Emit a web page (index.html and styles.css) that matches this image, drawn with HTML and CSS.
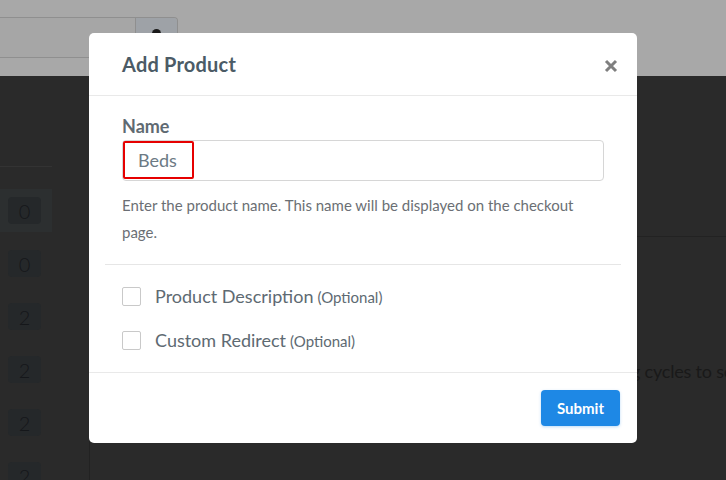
FILE: index.html
```html
<!DOCTYPE html>
<html lang="en">
<head>
<meta charset="utf-8">
<title>Add Product</title>
<link rel="stylesheet" href="styles.css">
</head>
<body>
<div class="page">
  <header class="topbar">
    <div class="search">
      <div class="search-field"></div>
      <div class="search-btn"><span class="search-dot"></span></div>
    </div>
  </header>
  <div class="main">
    <aside class="side">
      <div class="side-rule"></div>
      <div class="side-row active"><span class="badge">0</span></div>
      <div class="side-row"><span class="badge">0</span></div>
      <div class="side-row"><span class="badge">2</span></div>
      <div class="side-row"><span class="badge">2</span></div>
      <div class="side-row"><span class="badge">2</span></div>
      <div class="side-row"><span class="badge">2</span></div>
    </aside>
    <div class="gutter"></div>
    <section class="content">
      <div class="content-top"></div>
      <p class="content-text">g cycles to se</p>
    </section>
  </div>

  <div class="modal" role="dialog" aria-label="Add Product">
    <div class="modal-header">
      <h2 class="modal-title">Add Product</h2>
      <button class="close" aria-label="Close">
        <svg width="14" height="14" viewBox="0 0 14 14"><path d="M2 2 L12 12 M12 2 L2 12" stroke="#7f7f7f" stroke-width="3" stroke-linecap="butt"/></svg>
      </button>
    </div>
    <div class="modal-body">
      <label class="field-label">Name</label>
      <div class="input">
        <span class="input-value">Beds</span>
      </div>
      <p class="help">Enter the product name. This name will be displayed on the checkout page.</p>
    </div>
    <div class="options">
      <label class="option"><span class="check"></span><span class="opt-text">Product Description</span><span class="opt-small">(Optional)</span></label>
      <label class="option"><span class="check"></span><span class="opt-text">Custom Redirect</span><span class="opt-small">(Optional)</span></label>
    </div>
    <div class="modal-footer">
      <button class="submit">Submit</button>
    </div>
  </div>
</div>
</body>
</html>
```
FILE: styles.css
```css
html, body {
  margin: 0;
  padding: 0;
  width: 726px;
  height: 480px;
  overflow: hidden;
  font-family: Lato, "Open Sans", Arial, sans-serif;
}

.page {
  position: relative;
  width: 726px;
  height: 480px;
  background: #2a2a2a;
}

/* top band */
.topbar {
  height: 76px;
  background: #a8a8a8;
  padding-top: 17px;
  box-sizing: border-box;
}

.search {
  display: flex;
  width: 178px;
  height: 41px;
  box-sizing: border-box;
  border-top: 1px solid #8f8f8f;
  border-bottom: 1px solid #8f8f8f;
  border-right: 1px solid #8f8f8f;
  border-top-right-radius: 4px;
}

.search-field {
  width: 135px;
  background: #a6a6a6;
}

.search-btn {
  flex: 1;
  background: #9ea2a7;
  border-left: 1px solid #8f8f8f;
  border-top-right-radius: 4px;
  display: flex;
  justify-content: center;
  padding-top: 11px;
}

.search-dot {
  width: 9px;
  height: 9px;
  border-radius: 50%;
  background: #1a1a1a;
}

/* main dark area */
.main {
  display: flex;
  height: 404px;
}

.side {
  flex: 0 0 52px;
  padding-top: 90px;
}

.side-rule {
  height: 1px;
  background: #333;
  margin-bottom: 22px;
}

.side-row {
  height: 53px;
  display: flex;
  align-items: center;
  padding-left: 8px;
  box-sizing: border-box;
}

.side-row.active {
  height: 43px;
  background: #2c2f30;
  margin-bottom: 5px;
}

.badge {
  width: 33px;
  height: 27px;
  border-radius: 4px;
  background: #25282a;
  color: #15171a;
  font-size: 20px;
  font-weight: 300;
  display: flex;
  align-items: center;
  justify-content: center;
  font-family: Lato, "Open Sans", Arial, sans-serif;
}

.gutter {
  flex: 0 0 37px;
  border-right: 1px solid #222;
}

.content {
  flex: 1;
  min-width: 0;
  overflow: hidden;
}

.content-top {
  height: 160px;
  border-bottom: 1px solid #222;
}

.content-text {
  margin: 123px 0 0 541px;
  white-space: nowrap;
  font-size: 18px;
  letter-spacing: -0.2px;
  color: #191919;
  font-family: Lato, Arial, sans-serif;
}

/* modal */
.modal {
  position: absolute;
  left: 89px;
  top: 33px;
  width: 548px;
  height: 410px;
  background: #fff;
  border-radius: 5px;
  display: flex;
  flex-direction: column;
}

.modal-header {
  height: 62px;
  border-bottom: 1px solid #e9e9e9;
  display: flex;
  align-items: center;
  justify-content: space-between;
  padding: 0 19px 0 33px;
}

.modal-title {
  margin: 0;
  font-size: 20px;
  font-weight: 700;
  color: #4b5b66;
  letter-spacing: 0.2px;
}

.close {
  border: 0;
  background: none;
  padding: 0;
  display: flex;
  margin-top: 4px;
}

.modal-body {
  padding: 20px 33px 0 33px;
}

.field-label {
  display: block;
  font-size: 18px;
  font-weight: 700;
  color: #5f6a72;
  line-height: 20px;
}

.input {
  margin-top: 4px;
  height: 41px;
  box-sizing: border-box;
  border: 1px solid #d6d6d6;
  border-radius: 4px;
  position: relative;
}

.input-value {
  position: absolute;
  left: 0;
  top: 0;
  width: 71px;
  height: 38px;
  box-sizing: border-box;
  border: 2px solid #e60000;
  border-radius: 2px;
  padding-left: 13px;
  font-size: 18px;
  color: #6c7a84;
  line-height: 34px;
}

.help {
  margin: 11px 0 0 0;
  font-size: 15px;
  line-height: 27px;
  color: #6b6f74;
}

.options {
  margin: 18px 16px 0 16px;
  border-top: 1px solid #e6e6e6;
  padding: 21px 17px 0 17px;
  height: 82px;
}

.option {
  display: flex;
  align-items: center;
  height: 20px;
  margin-bottom: 24px;
}

.check {
  width: 19px;
  height: 19px;
  box-sizing: border-box;
  border: 1px solid #c9c9c9;
  border-radius: 2px;
  margin-right: 14px;
}

.opt-text {
  font-size: 18px;
  color: #5e6a72;
  font-weight: 400;
}

.opt-small {
  font-size: 15px;
  color: #5e6a72;
  margin-left: 4px;
  margin-top: 2px;
}

.modal-footer {
  margin-top: auto;
  border-top: 1px solid #e9e9e9;
  height: 71px;
  display: flex;
  align-items: flex-start;
  justify-content: flex-end;
  padding: 17px 17px 0 0;
  box-sizing: border-box;
}

.submit {
  width: 79px;
  height: 36px;
  border: 0;
  border-radius: 4px;
  background: #1e88e5;
  color: #fff;
  font-family: Lato, Arial, sans-serif;
  font-weight: 700;
  font-size: 15px;
  box-shadow: 0 1px 3px rgba(30, 136, 229, 0.3);
}
```
